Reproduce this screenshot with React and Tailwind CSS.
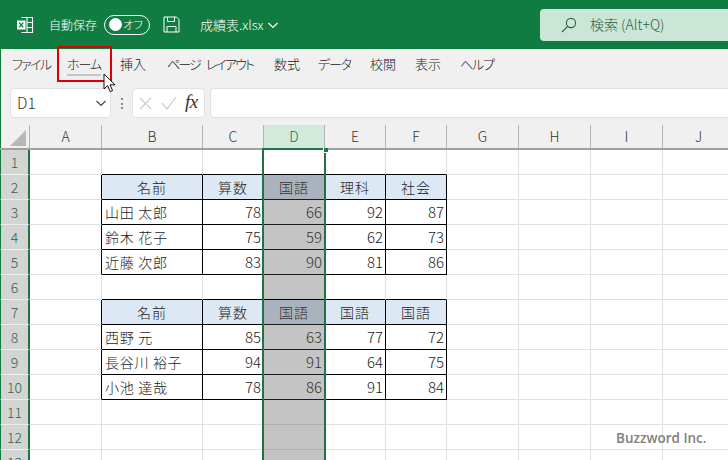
import React from "react";

const colHeads = [
  ["A", "w-[72px]"],
  ["B", "w-[101px]"],
  ["C", "w-[61px]"],
  ["D", "w-[61px]"],
  ["E", "w-[61px]"],
  ["F", "w-[61px]"],
  ["G", "w-[72px]"],
  ["H", "w-[72px]"],
  ["I", "w-[72px]"],
  ["J", "w-[72px]"],
];

const rows = {
  2: ["名前", "算数", "国語", "理科", "社会"],
  3: ["山田 太郎", "78", "66", "92", "87"],
  4: ["鈴木 花子", "75", "59", "62", "73"],
  5: ["近藤 次郎", "83", "90", "81", "86"],
  7: ["名前", "算数", "国語", "国語", "国語"],
  8: ["西野 元", "85", "63", "77", "72"],
  9: ["長谷川 裕子", "94", "91", "64", "75"],
  10: ["小池 達哉", "78", "86", "91", "84"],
};

function Cell({ r, c }) {
  const i = "BCDEF".indexOf(c);
  const data = rows[r];
  const inTable = data && i >= 0;
  const header = r === 2 || r === 7;
  const belowEdge = r === 1 || r === 6 || rows[r] !== undefined;
  const w = colHeads.find((h) => h[0] === c)[1];
  const blackB = belowEdge && i >= 0;
  const blackR = data && (c === "A" || i >= 0);
  let bg = "bg-white";
  if (c === "D" && r > 1) bg = header ? "bg-[#aab2bc]" : "bg-[#c4c4c4]";
  else if (inTable && header) bg = "bg-[#dce9f4]";
  const bb = blackB ? (c === "D" ? (r === 1 || r === 6 ? "border-b-black" : "border-b-[#1c1c1c]") : "border-b-black") : c === "D" && r > 1 ? "border-b-[#b0b0b0]" : "border-b-[#e0e0e0]";
  const br = blackR ? "border-r-black" : "border-r-[#e0e0e0]";
  const align = !inTable ? "" : header ? "justify-center tracking-[1px] text-[14px]" : i === 0 ? "justify-start pl-[3px] tracking-[0.7px] text-[14px]" : "justify-end pr-[2px] text-[15px]";
  const ink = c === "D" ? "text-[#333333]" : "text-[#1c1c1c]";
  return (
    <div className={`${w} h-[25px] shrink-0 flex items-center border-r border-b ${bb} ${br} ${bg} ${align} font-light ${ink} whitespace-nowrap`}>
      {inTable ? data[i] : ""}
    </div>
  );
}

function ExcelIcon() {
  return (
    <svg width="18" height="18" viewBox="0 0 18 18" className="shrink-0">
      <path d="M5.5 1.5h11v15h-11" fill="none" stroke="#fff" strokeWidth="1.1" />
      <path d="M11 1.5v15M11 6.5h5.5M11 11.5h5.5" stroke="#fff" strokeWidth="1.1" />
      <rect x="1" y="4.5" width="8.5" height="9" fill="#fff" />
      <path d="M3.2 6.6l4 4.8M7.2 6.6l-4 4.8" stroke="#107c41" strokeWidth="1.4" />
    </svg>
  );
}

function SaveIcon() {
  return (
    <svg width="17" height="17" viewBox="0 0 17 17" className="shrink-0" fill="none" stroke="#fff" strokeWidth="1">
      <path d="M1 1h12.5l2.5 2.5V16H1z" />
      <path d="M4.5 1v4.5h7V1M4 16v-5.5h9V16" />
    </svg>
  );
}

export default function App() {
  return (
    <div
      className="relative w-[728px] h-[460px] overflow-hidden bg-white flex flex-col"
      style={{ fontFamily: '"Noto Sans CJK JP","Noto Sans",sans-serif' }}
    >
      {/* Title bar */}
      <div className="h-[49px] shrink-0 bg-[#107c41] flex items-center text-white text-[13px] font-light">
        <div className="ml-[16px]"><ExcelIcon /></div>
        <span className="ml-[15px] w-[50px] text-[12px] whitespace-nowrap">自動保存</span>
        <div className="ml-[5px] w-[46px] h-[20px] rounded-full border border-white flex items-center pl-[4px] pr-[6px] justify-between">
          <div className="w-[13px] h-[13px] rounded-full bg-white" />
          <span className="text-[11.5px] leading-none [font-feature-settings:'palt']">オフ</span>
        </div>
        <div className="ml-[13px]"><SaveIcon /></div>
        <span className="ml-[20px] w-[64px] whitespace-nowrap">成績表.xlsx</span>
        <svg width="12" height="12" viewBox="0 0 12 12" className="ml-[3px]" fill="none" stroke="#fff" strokeWidth="1.1">
          <path d="M1.5 4l4.5 4.5L10.5 4" />
        </svg>
        <div className="ml-auto w-[188px] h-[32px] rounded-l-[4px] bg-[#c9e6d7] flex items-center pl-[21px] text-[#2f5f47] text-[14px]">
          <svg width="16" height="16" viewBox="0 0 16 16" fill="none" stroke="#2f5f47" strokeWidth="1.1">
            <circle cx="10" cy="6" r="4.6" />
            <path d="M6.7 9.3L1 15" />
          </svg>
          <span className="ml-[13px] whitespace-nowrap">検索 (Alt+Q)</span>
        </div>
      </div>

      {/* Menu */}
      <div className="h-[39px] shrink-0 bg-[#f0f0f0] border-l border-l-[#107c41] flex items-center pl-[11px] pb-[9px] gap-[18px] text-[13px] font-light text-[#222] whitespace-nowrap [font-feature-settings:'palt']">
        <span className="w-[38px] tracking-[-1.7px]">ファイル</span>
        <span className="w-[34px] relative ml-[-1px] tracking-[-1px]">ホーム
          <span className="absolute left-0 right-0 -bottom-[2px] h-[2px] bg-[#c6c6c6]" />
        </span>
        <span className="w-[26px] ml-[1px]">挿入</span>
        <span className="w-[86px] ml-[3px] tracking-[-1.9px] [word-spacing:5px]">ページ レイアウト</span>
        <span className="w-[26px] ml-[3px]">数式</span>
        <span className="w-[33px] tracking-[-1.2px]">データ</span>
        <span className="w-[26px] ml-[1px]">校閲</span>
        <span className="w-[26px] ml-[1px]">表示</span>
        <span className="w-[32px] ml-[1px] tracking-[-1.2px]">ヘルプ</span>
      </div>

      {/* Formula bar */}
      <div className="h-[37px] shrink-0 bg-[#f0f0f0] border-l border-l-[#107c41] flex items-start">
        <div className="ml-[9px] w-[101px] h-[30px] bg-white border border-[#e2e2e2] rounded-[4px] flex items-center justify-between pl-[6px] pr-[3px] text-[15.5px] font-light text-[#333]">
          <span>D1</span>
          <svg width="12" height="12" viewBox="0 0 12 12" fill="none" stroke="#444" strokeWidth="1.2">
            <path d="M1.5 4l4.5 4.5L10.5 4" />
          </svg>
        </div>
        <div className="ml-[10px] w-[2px] h-[11px] mt-[10px] flex flex-col justify-between">
          <span className="w-[2px] h-[2px] bg-[#8a8a8a]" />
          <span className="w-[2px] h-[2px] bg-[#8a8a8a]" />
          <span className="w-[2px] h-[2px] bg-[#8a8a8a]" />
        </div>
        <div className="ml-[9px] w-[73px] h-[30px] bg-white border border-[#e2e2e2] rounded-[4px] flex items-center pl-[6px]">
          <svg width="13" height="13" viewBox="0 0 14 14" fill="none" stroke="#c4c4c4" strokeWidth="1.1">
            <path d="M1 1l12 12M13 1L1 13" />
          </svg>
          <svg width="16" height="14" viewBox="0 0 16 14" className="ml-[9px]" fill="none" stroke="#c4c4c4" strokeWidth="1.1">
            <path d="M1 7l5 6L15 1" />
          </svg>
          <span className="ml-[8px] text-[19px] leading-none pb-[3px] italic text-[#333] tracking-[-0.5px]" style={{ fontFamily: '"Liberation Serif",serif' }}>fx</span>
        </div>
        <div className="ml-[5px] flex-1 h-[30px] bg-white border border-[#e2e2e2] border-r-0 rounded-l-[4px]" />
      </div>

      {/* Column headers */}
      <div className="h-[25px] shrink-0 flex bg-[#f0f0f0] border-b-2 border-b-[#a0a0a0] text-[14px] font-light text-[#333]">
        <div className="w-[30px] shrink-0 relative border-r border-r-[#b4b4b4] border-l border-l-[#107c41]">
          <svg width="18" height="18" viewBox="0 0 18 18" className="absolute left-[8px] top-[4px]">
            <path d="M17 1v16H1z" fill="#b7b7b7" />
          </svg>
        </div>
        {colHeads.map(([c, w]) => (
          <div
            key={c}
            className={`${w} shrink-0 flex items-center justify-center border-r border-r-[#b4b4b4] ${c === "D" ? "bg-[#d2eadb] text-[#217346]" : ""}`}
          >
            {c}
          </div>
        ))}
      </div>

      {/* Grid */}
      <div className="flex flex-col">
        {Array.from({ length: 13 }, (_, k) => k + 1).map((r) => (
          <div key={r} className="flex h-[25px] shrink-0">
            <div className="w-[30px] h-[25px] shrink-0 bg-[#d2d5d2] border-b border-b-[#ececec] border-l border-l-[#107c41] border-r-2 border-r-[#217346] flex items-center justify-center text-[14px] font-light text-[#35604a]">
              {r}
            </div>
            {colHeads.map(([c]) => (
              <Cell key={c} r={r} c={c} />
            ))}
          </div>
        ))}
      </div>

      {/* Selection outline */}
      <div className="absolute left-[262px] top-[148px] w-[64px] h-[330px] border-2 border-[#217346]" />
      <div className="absolute left-[323px] top-[148px] w-[5px] h-[5px] bg-[#217346] border-l border-b border-white" />

      {/* Red highlight */}
      <div className="absolute left-[57px] top-[46px] w-[55px] h-[36px] border-2 border-[#dc0000]" />

      {/* Cursor */}
      <svg width="14" height="20" viewBox="0 0 14 20" className="absolute left-[103px] top-[73px]">
        <path d="M1 1v15l3.6-3.4 2.6 6 2.4-1-2.6-5.8h5z" fill="#fff" stroke="#111" strokeWidth="1" strokeLinejoin="round" />
      </svg>

      {/* Watermark */}
      <span
        className="absolute left-[616px] top-[428px] text-[13.5px] font-semibold text-[#808080] whitespace-nowrap"
        style={{ fontFamily: '"Open Sans",sans-serif' }}
      >
        Buzzword Inc.
      </span>
    </div>
  );
}
